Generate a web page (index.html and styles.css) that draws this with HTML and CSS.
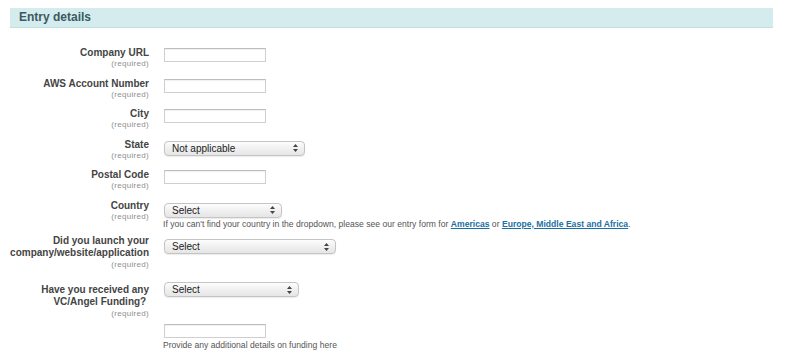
FILE: index.html
```html
<!DOCTYPE html>
<html lang="en">
<head>
  <meta charset="UTF-8">
  <title>Entry details</title>
  <link rel="stylesheet" href="styles.css">
</head>
<body>

  <div class="section">
    <h2 class="section-title">Entry details</h2>

    <form class="entry-form">
      <div class="row">
        <div class="label"><label for="url">Company URL</label><span class="req">(required)</span></div>
        <div class="field"><input type="text" id="url" class="text"></div>
      </div>

      <div class="row">
        <div class="label"><label for="aws">AWS Account Number</label><span class="req">(required)</span></div>
        <div class="field"><input type="text" id="aws" class="text"></div>
      </div>

      <div class="row">
        <div class="label"><label for="city">City</label><span class="req">(required)</span></div>
        <div class="field"><input type="text" id="city" class="text"></div>
      </div>

      <div class="row">
        <div class="label"><label for="state">State</label><span class="req">(required)</span></div>
        <div class="field">
          <div class="select-wrap state">
            <select id="state"><option>Not applicable</option></select>
            <svg class="arrows" width="5" height="8" viewBox="0 0 5 8"><path d="M2.5 0 L5 3 L0 3 Z M0 5 L5 5 L2.5 8 Z" fill="#444"/></svg>
          </div>
        </div>
      </div>

      <div class="row">
        <div class="label"><label for="postal">Postal Code</label><span class="req">(required)</span></div>
        <div class="field"><input type="text" id="postal" class="text"></div>
      </div>

      <div class="row row-country">
        <div class="label"><label for="country">Country</label><span class="req">(required)</span></div>
        <div class="field">
          <div class="select-wrap country">
            <select id="country"><option>Select</option></select>
            <svg class="arrows" width="5" height="8" viewBox="0 0 5 8"><path d="M2.5 0 L5 3 L0 3 Z M0 5 L5 5 L2.5 8 Z" fill="#444"/></svg>
          </div>
          <p class="hint">If you can't find your country in the dropdown, please see our entry form for <a href="#">Americas</a> or <a href="#">Europe, Middle East and Africa</a>.</p>
        </div>
      </div>

      <div class="row row-tall row-launch">
        <div class="label"><label for="launch">Did you launch your<br>company/website/application</label><span class="req">(required)</span></div>
        <div class="field">
          <div class="select-wrap launch">
            <select id="launch"><option>Select</option></select>
            <svg class="arrows" width="5" height="8" viewBox="0 0 5 8"><path d="M2.5 0 L5 3 L0 3 Z M0 5 L5 5 L2.5 8 Z" fill="#444"/></svg>
          </div>
        </div>
      </div>

      <div class="row row-tall row-funding">
        <div class="label"><label for="funding">Have you received any<br>VC/Angel Funding?&nbsp;</label><span class="req">(required)</span></div>
        <div class="field">
          <div class="select-wrap funding">
            <select id="funding"><option>Select</option></select>
            <svg class="arrows" width="5" height="8" viewBox="0 0 5 8"><path d="M2.5 0 L5 3 L0 3 Z M0 5 L5 5 L2.5 8 Z" fill="#444"/></svg>
          </div>
        </div>
      </div>

      <div class="row row-extra">
        <div class="label"></div>
        <div class="field">
          <input type="text" class="text">
          <p class="hint">Provide any additional details on funding here</p>
        </div>
      </div>
    </form>
  </div>

</body>
</html>
```

FILE: styles.css
```css
body {
  margin: 0;
  font-family: "Liberation Sans", Arial, sans-serif;
  background: #fff;
  color: #444;
}

.section {
  margin: 8px 27px 0 10px;
}

.section-title {
  margin: 0;
  height: 19px;
  line-height: 19px;
  padding-left: 9px;
  font-size: 12px;
  font-weight: bold;
  color: #3b5a60;
  background: #d4ecee;
  border-bottom: 1px solid #c3dfe2;
}

.entry-form {
  padding-top: 19px;
}

.row {
  display: flex;
  gap: 15px;
  margin-bottom: 8.5px;
}

.label {
  width: 139px;
  flex-shrink: 0;
  text-align: right;
}

.label label {
  display: block;
  font-size: 10px;
  font-weight: bold;
  line-height: 12px;
  color: #444;
}

.req {
  display: block;
  font-size: 8px;
  line-height: 10px;
  letter-spacing: 0.3px;
  color: #8f8f8f;
}

.field {
  flex: 1;
}

.text {
  display: block;
  box-sizing: border-box;
  width: 102px;
  height: 14px;
  margin: 1px 0 0;
  padding: 0 3px;
  border: 1px solid #cfcfcf;
  border-top-color: #bdbdbd;
  box-shadow: inset 0 1px 1px rgba(0, 0, 0, 0.06);
  font-size: 10px;
}

.select-wrap {
  position: relative;
  margin-top: 2px;
  height: 15px;
}

.select-wrap select {
  -webkit-appearance: none;
  appearance: none;
  display: block;
  box-sizing: border-box;
  width: 100%;
  height: 15px;
  margin: 0;
  padding: 0 18px 0 7px;
  border: 1px solid #c4c4c4;
  border-radius: 4px;
  background: linear-gradient(#fdfdfd, #f0f0f0 50%, #e6e6e6);
  box-shadow: 0 1px 1px rgba(0, 0, 0, 0.08);
  font-family: "Liberation Sans", Arial, sans-serif;
  font-size: 10px;
  line-height: 13px;
  color: #222;
}

.select-wrap .arrows {
  position: absolute;
  right: 7px;
  top: 3.5px;
  pointer-events: none;
}

.state { width: 141px; }
.country { width: 118px; margin-top: 3px; }
.launch { width: 172px; margin-top: 4px; }
.funding { width: 135px; margin-top: -2px; }

.hint {
  margin: 1px 0 0 -1px;
  font-size: 8.6px;
  line-height: 10px;
  color: #555;
  white-space: nowrap;
}

.hint a {
  color: #1d6ea3;
  font-weight: bold;
}

.row-country {
  margin-bottom: 6.5px;
}

.row-tall .req {
  line-height: 11px;
}

.row-launch {
  margin-bottom: 14px;
}

.row-funding {
  margin-bottom: 4px;
}

.row-extra .hint {
  margin-top: 2px;
}
```
